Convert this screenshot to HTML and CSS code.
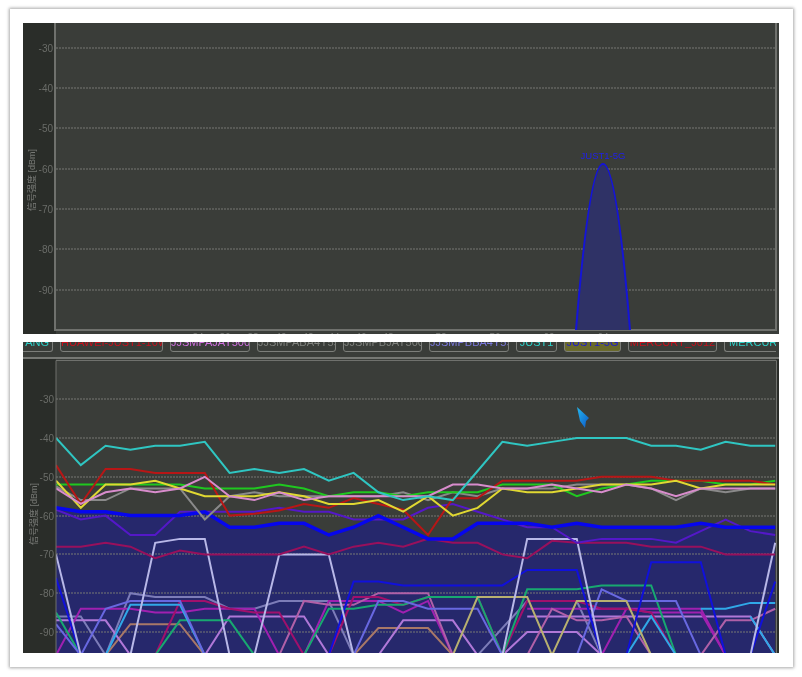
FILE: index.html
```html
<!DOCTYPE html>
<html lang="zh">
<head>
<meta charset="utf-8">
<title>信号强度</title>
<link rel="stylesheet" href="styles.css">
</head>
<body>
<main class="card">
  <section class="screen">
    <svg class="chart chart-top" viewBox="23 23 756 311" role="img">
      <rect class="axis-bg" x="23" y="23" width="33" height="311"/>
      <rect class="plot-bg" x="56" y="23" width="723" height="311"/>
      <g class="grid">
        <line x1="56" x2="776" y1="48" y2="48"/><line x1="56" x2="776" y1="88" y2="88"/>
        <line x1="56" x2="776" y1="128" y2="128"/><line x1="56" x2="776" y1="169" y2="169"/>
        <line x1="56" x2="776" y1="209" y2="209"/><line x1="56" x2="776" y1="249" y2="249"/>
        <line x1="56" x2="776" y1="290" y2="290"/>
      </g>
      <path class="frame" d="M55 23V330H776V23"/>
      <g class="ylabels">
        <text x="53" y="52">-30</text><text x="53" y="92">-40</text><text x="53" y="132">-50</text>
        <text x="53" y="173">-60</text><text x="53" y="213">-70</text><text x="53" y="253">-80</text>
        <text x="53" y="294">-90</text>
      </g>
      <text class="ytitle" transform="translate(34.500 211) rotate(-90)">信号强度 [dBm]</text>
      <g class="xlabels">
        <text x="198" y="341">34</text><text x="225" y="341">36</text><text x="253" y="341">38</text>
        <text x="281" y="341">40</text><text x="308" y="341">42</text><text x="334" y="341">44</text>
        <text x="361" y="341">46</text><text x="388" y="341">48</text><text x="441" y="341">52</text>
        <text x="495" y="341">56</text><text x="549" y="341">60</text><text x="603" y="341">64</text>
      </g>
      <path class="peak" d="M576 330Q603 -2 630 330"/>
      <text class="peak-label" x="603" y="159">JUST1-5G</text>
    </svg>
  </section>

  <section class="screen">
    <div class="legend">
      <span class="chip chip-first c-cyan">YANG</span>
      <span class="chip w-103 c-red">HUAWEI-JUST1-10W</span>
      <span class="chip w-80 c-pink">JJSMPAJAY500</span>
      <span class="chip w-79 c-gray">JJSMPABA4Y59</span>
      <span class="chip w-79 c-gray">JJSMPBJAY500</span>
      <span class="chip w-80 c-violet">JJSMPBBA4Y59</span>
      <span class="chip w-41 c-cyan">JUST1</span>
      <span class="chip w-57 chip-on c-blue">JUST1-5G</span>
      <span class="chip w-89 c-red">MERCURY_J012</span>
      <span class="chip chip-last c-cyan">MERCURY_</span>
    </div>
    <div class="rule"></div>
    <svg class="chart chart-bottom" viewBox="23 359 756 294" role="img">
      <defs>
        <clipPath id="plot"><rect x="56" y="360" width="720" height="293"/></clipPath>
        <linearGradient id="cur" x1="0" y1="0" x2="1" y2="1">
          <stop offset="0" stop-color="#25b8ee"/><stop offset="1" stop-color="#0c58c8"/>
        </linearGradient>
      </defs>
      <rect class="axis-bg" x="23" y="359" width="33" height="294"/>
      <rect class="plot-bg" x="56" y="359" width="723" height="294"/>
      <rect class="edge" x="776" y="359" width="3" height="294"/>
      <g clip-path="url(#plot)">
        <g transform="translate(56 438) scale(24.8 3.88) translate(0 -40)">
          <polygon class="area" points="0,58 1,59 2,59 3,60 4,60 5,60 6,59 7,63 8,63 9,62 10,62 11,65 12,63 13,60 14,63 15,66 16,66 17,62 18,62 19,62 20,63 21,62 22,63 23,63 24,63 25,63 26,62 27,63 28,63 29,63 29,100 0,100"/>
        </g>
        <g class="grid">
          <line x1="56" x2="776" y1="399" y2="399"/><line x1="56" x2="776" y1="438" y2="438"/>
          <line x1="56" x2="776" y1="477" y2="477"/><line x1="56" x2="776" y1="516" y2="516"/>
          <line x1="56" x2="776" y1="554" y2="554"/><line x1="56" x2="776" y1="593" y2="593"/>
          <line x1="56" x2="776" y1="632" y2="632"/>
        </g>
        <g class="series" transform="translate(56 438) scale(24.8 3.88) translate(0 -40)">
          <polyline class="s2 tan" points="2,96 3,88 4,88 5,88 6,96"/>
          <polyline class="s2 tan" points="12,96 13,89 14,89 15,89 16,96"/>
          <polyline class="s2 lavgray" points="0,86 1,86 2,96"/>
          <polyline class="s2 lavgray" points="2,96 3,80 4,81 5,81 6,81 7,84 8,84 9,82 10,82 11,82 12,96"/>
          <polyline class="s2 lavgray" points="17,96 19,82 20,82 21,82 22,96"/>
          <polyline class="s2 lilac" points="0,87 1,87 2,87 3,96"/>
          <polyline class="s2 lilac" points="6,96 7,86 8,86 9,86 10,86 11,96"/>
          <polyline class="s2 lilac" points="13,96 14,87 15,87 16,87 17,96"/>
          <polyline class="s2 lilac" points="18,96 19,90 20,90 21,90 22,96"/>
          <polyline class="s2 lilac" points="19,86 20,86 21,86 22,86 23,86 24,86 25,86 26,86 27,86 28,86 29,96"/>
          <polyline class="s2 magenta" points="0,96 1,84 2,84 3,84 4,85 5,85 6,84 7,84 8,84 9,96"/>
          <polyline class="s2 magenta" points="10,96 11,82 12,82 13,82 14,85 15,82 16,96"/>
          <polyline class="s2 magenta" points="19,84 20,84 21,84 22,84 23,84 24,84 25,84 26,84 27,96"/>
          <polyline class="s2 magenta" points="22,96 23,84 24,85 25,85 26,85 27,96"/>
          <polyline class="s2 rose" points="9,96 10,82 11,83 12,83 13,80 14,80 15,80 16,96"/>
          <polyline class="s2 rose" points="19,96 20,84 21,87 22,87 23,86 24,96"/>
          <polyline class="s2 rose" points="26,96 27,87 28,87 29,84"/>
          <polyline class="s2 crim" points="4,96 5,82 6,82 7,84 8,85 9,85 10,96"/>
          <polyline class="s2 crim" points="11,96 12,81 13,81 14,83 15,81 16,81 17,81 18,96"/>
          <polyline class="s2 crim" points="18,96 19,82 20,82 21,82 22,84 23,84 24,85 25,96"/>
          <polyline class="s2 teal" points="0,85 1,96"/>
          <polyline class="s2 teal" points="4,96 5,87 6,87 7,87 8,96"/>
          <polyline class="s2 teal" points="10,96 11,84 12,84 13,83 14,83 15,81 16,81 17,81 18,96"/>
          <polyline class="s2 teal" points="18,96 19,79 20,79 21,79 22,78 23,78 24,78 25,96"/>
          <polyline class="s2 sky" points="2,96 3,83 4,83 5,83 6,96"/>
          <polyline class="s2 sky" points="23,96 24,86 25,96"/>
          <polyline class="s2 sky" points="26,84 27,84 28,82.5 29,82.5"/>
          <polyline class="s2 sky" points="28,86 29,96"/>
          <polyline class="s2 violet" points="0,88 1,96 2,84 3,82 4,82 5,82 6,96"/>
          <polyline class="s2 violet" points="12,96 13,82 14,82 15,84 16,84 17,84 18,96"/>
          <polyline class="s2 violet" points="21,96 22,79 23,82 24,82 25,82 26,96"/>
          <polyline class="s2 khaki" points="16,96 17,81 18,81 19,81 20,96"/>
          <polyline class="s2 khaki" points="20,96 21,82 22,82 23,82 24,96"/>
          <polyline class="s2 blue2" points="0,76 1,96"/>
          <polyline class="s2 blue2" points="11,96 12,77 13,77 14,78 15,78 16,78 17,78 18,78 19,74 20,74 21,74 22,96"/>
          <polyline class="s2 blue2" points="23,96 24,72 25,72 26,72 27,96"/>
          <polyline class="s2 blue2" points="28,96 29,77"/>
          <polyline class="s2 pale" points="0,70 1,96"/>
          <polyline class="s2 pale" points="3,96 4,67 5,66 6,66 7,96"/>
          <polyline class="s2 pale" points="8,96 9,70 10,70 11,70 12,96"/>
          <polyline class="s2 pale" points="18,96 19,66 20,66 21,66 22,96"/>
          <polyline class="s2 pale" points="28,96 29,67"/>
          <polyline class="s2 wine" points="0,68 1,68 2,67 3,68 4,71 5,69 6,70 7,70 8,70 9,70 10,68 11,70 12,68 13,67 14,68 15,66 16,67 17,67 18,70 19,71 20,66.5 21,67 22,67 23,67 24,68 25,68 26,68 27,70 28,70 29,70"/>
          <polyline class="s2 purple" points="0,58.5 1,61 2,60 3,65 4,65 5,59 6,59 7,59 8,59 9,58 10,59 11,59 12,61 13,61 14,61 15,58 16,57 17,59 18,61 19,63 20,63 21,67 22,66 23,66 24,66 25,67 26,64 27,61 28,64 29,65"/>
          <polyline class="s3 blue3" points="0,58 1,59 2,59 3,60 4,60 5,60 6,59 7,63 8,63 9,62 10,62 11,65 12,63 13,60 14,63 15,66 16,66 17,62 18,62 19,62 20,63 21,62 22,63 23,63 24,63 25,63 26,62 27,63 28,63 29,63"/>
          <polyline class="s2 gray" points="0,52.5 1,56 2,56 3,53 4,53 5,53 6,61 7,55 8,54 9,55 10,55 11,55 12,55 13,55 14,54 15,56 16,54 17,55 18,53 19,53 20,53 21,52 22,52 23,52 24,53 25,56 26,53 27,54 28,53 29,53"/>
          <polyline class="s2 green" points="0,52 1,52 2,52 3,52 4,52 5,52 6,53 7,53 8,53 9,52 10,53 11,55 12,54 13,54 14,55 15,54 16,54 17,54 18,52 19,52 20,52 21,55 22,53 23,52 24,51 25,51 26,51 27,52 28,52 29,51"/>
          <polyline class="s2 red" points="0,47 1,57 2,48 3,48 4,49 5,49 6,49 7,60 8,59.5 9,58.7 10,57 11,58 12,55.5 13,57 14,58.5 15,65 16,55.5 17,55.5 18,51 19,51 20,51 21,51 22,50 23,50 24,50 25,51 26,51 27,51 28,51 29,52"/>
          <polyline class="s2 yellow" points="0,51 1,58 2,52 3,52 4,51 5,53 6,55 7,55 8,55 9,54 10,55 11,57 12,57 13,56 14,59 15,55 16,60 17,58 18,53 19,54 20,54 21,53 22,52 23,52 24,52 25,51 26,53 27,52 28,52 29,52"/>
          <polyline class="s2 pink" points="0,53 1,57 2,54 3,53 4,54 5,53 6,50 7,55 8,56 9,54 10,56 11,55 12,55 13,55 14,55 15,55 16,52 17,52 18,53 19,53 20,52 21,53 22,54 23,52 24,53 25,55 26,53 27,53 28,53 29,53"/>
          <polyline class="s2 cyan" points="0,40 1,47 2,42 3,43 4,42 5,42 6,41 7,49 8,48 9,49 10,48 11,51 12,49 13,54 14,56 15,55 16,56 17,48.5 18,41 19,42 20,41 21,40 22,40 23,40 24,42 25,42 26,43 27,41 28,42 29,42"/>
        </g>
      </g>
      <path class="frame frame-thin" d="M56 653V360.500H776.500V653"/>
      <g class="ylabels">
        <text x="54" y="403">-30</text><text x="54" y="442">-40</text><text x="54" y="481">-50</text>
        <text x="54" y="520">-60</text><text x="54" y="558">-70</text><text x="54" y="597">-80</text>
        <text x="54" y="636">-90</text>
      </g>
      <text class="ytitle" transform="translate(36.500 545) rotate(-90)">信号强度 [dBm]</text>
      <polygon class="cursor" points="577,407 589,418 586,421 585,428 580,421"/>
    </svg>
  </section>
</main>
</body>
</html>
```

FILE: styles.css
```css
html, body {
  margin: 0;
  background: #ffffff;
}
body {
  width: 802px;
  height: 677px;
  overflow: hidden;
  font-family: "Liberation Sans", "Noto Sans CJK SC", sans-serif;
}
.card {
  box-sizing: border-box;
  width: 783px;
  height: 658px;
  margin: 9px 0 0 10px;
  padding: 14px 14px 14px 13px;
  background: #ffffff;
  box-shadow: 0 0 3px 1px #a8a8a8;
  display: flex;
  flex-direction: column;
  gap: 8px;
}
.screen {
  width: 756px;
  height: 311px;
  display: flex;
  flex-direction: column;
  background: #3a3d39;
  overflow: hidden;
}
.chart {
  display: block;
  width: 756px;
  filter: blur(0.5px);
  font-family: "Liberation Sans", "Noto Sans CJK SC", sans-serif;
}
.chart-top { height: 311px; }
.chart-bottom { height: 294px; }

.legend {
  height: 15px;
  flex: none;
  display: flex;
  align-items: flex-start;
  gap: 7px;
  overflow: hidden;
  filter: blur(0.5px);
}
.chip {
  box-sizing: border-box;
  flex: none;
  height: 19px;
  margin-top: -9px;
  border: 1px solid #7c7e7a;
  border-radius: 3px;
  font-size: 11px;
  line-height: 17px;
  text-align: center;
  white-space: nowrap;
  overflow: hidden;
}
.chip-first { width: 30px; direction: rtl; border-left: 0; border-radius: 0 3px 3px 0; padding-right: 3px; }
.chip-last { width: 52px; margin-right: -4px; border-right: 0; border-radius: 3px 0 0 3px; text-align: left; padding-left: 4px; }
.w-103 { width: 103px; }
.w-80 { width: 80px; }
.w-79 { width: 79px; }
.w-41 { width: 41px; }
.w-57 { width: 57px; }
.w-89 { width: 89px; }
.chip-on { background: #6a6a2c; }
.c-cyan { color: #2cd0c8; }
.c-red { color: #c8101c; }
.c-pink { color: #d070e0; }
.c-gray { color: #7e807c; }
.c-violet { color: #7a78dc; }
.c-blue { color: #1c1cd0; }

.rule {
  height: 2px;
  flex: none;
  background: #767874;
}

.axis-bg { fill: #2a2d29; }
.plot-bg { fill: #3a3d39; }
.edge { fill: #2a2d29; }
.grid line {
  stroke: #777974;
  stroke-width: 1;
  stroke-dasharray: 2 1;
}
.frame {
  fill: none;
  stroke: #6f716d;
  stroke-width: 2;
}
.frame-thin { stroke-width: 1; }
.ylabels text {
  fill: #6a6c68;
  font-size: 10px;
  text-anchor: end;
}
.xlabels text {
  fill: #7c7e7a;
  font-size: 10px;
  text-anchor: middle;
}
.ytitle {
  fill: #777975;
  font-size: 9px;
}
.peak {
  fill: #2f3266;
  stroke: #1414d8;
  stroke-width: 2;
}
.peak-label {
  fill: #2020e8;
  font-size: 9.500px;
  text-anchor: middle;
}
.area { fill: #26286c; }
.series polyline {
  fill: none;
  vector-effect: non-scaling-stroke;
  stroke-linejoin: miter;
}
.s2 { stroke-width: 2; }
.s3 { stroke-width: 3.500; }
.cyan { stroke: #2fc6c2; }
.red { stroke: #b81616; }
.green { stroke: #1fc81f; }
.yellow { stroke: #e0d832; }
.pink { stroke: #d88ccc; }
.gray { stroke: #8a8a8a; }
.purple { stroke: #5418c8; }
.blue3 { stroke: #0606ee; }
.wine { stroke: #98105c; }
.pale { stroke: #b8b8e8; }
.blue2 { stroke: #1010dc; }
.teal { stroke: #18a870; }
.sky { stroke: #30a8e8; }
.violet { stroke: #6868e0; }
.lavgray { stroke: #7c7cb8; }
.magenta { stroke: #a020b0; }
.rose { stroke: #b060a8; }
.crim { stroke: #a0106c; }
.lilac { stroke: #b078d8; }
.tan { stroke: #a87868; }
.khaki { stroke: #b8b070; }
.cursor { fill: url(#cur); }
```
